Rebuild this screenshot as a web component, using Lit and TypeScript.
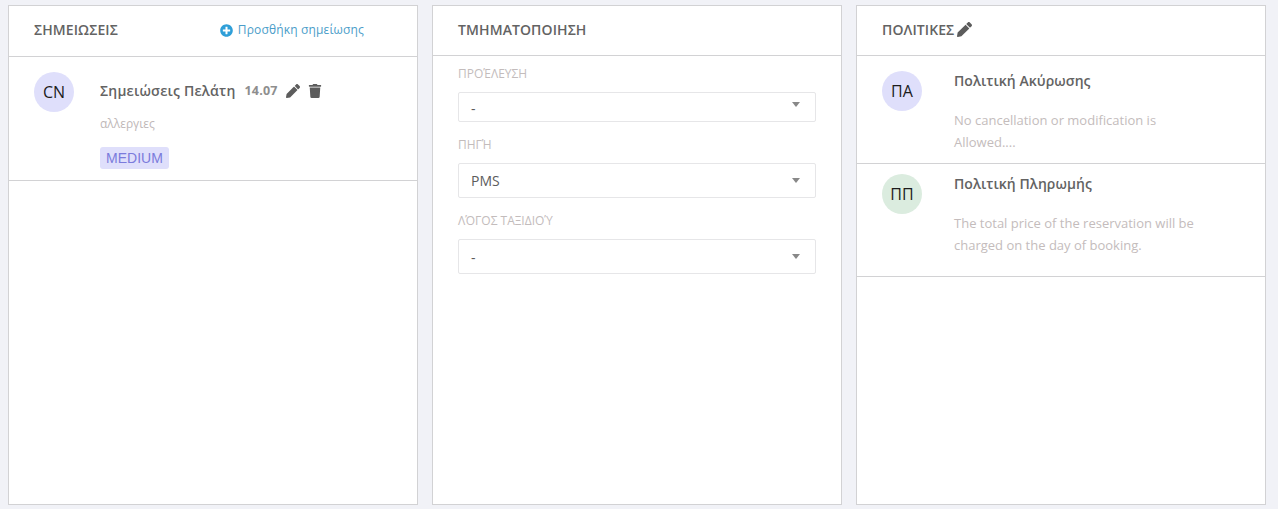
import { LitElement, html, css, svg } from "lit";
import { customElement } from "lit/decorators.js";

const pencil = svg`<path d="M497.9 142.1l-46.1 46.1c-4.7 4.7-12.3 4.7-17 0l-111-111c-4.7-4.7-4.7-12.3 0-17l46.1-46.1c18.7-18.7 49.1-18.7 67.9 0l60.1 60.1c18.8 18.7 18.8 49.1 0 67.9zM284.2 99.8L21.6 362.4.4 483.9c-2.9 16.4 11.4 30.6 27.8 27.8l121.5-21.3 262.6-262.6c4.7-4.7 4.7-12.3 0-17l-111-111c-4.8-4.7-12.4-4.7-17.1 0z"/>`;
const trash = svg`<path d="M432 32H312l-9.4-18.7A24 24 0 0 0 281.1 0H166.8a23.72 23.72 0 0 0-21.4 13.3L136 32H16A16 16 0 0 0 0 48v32a16 16 0 0 0 16 16h416a16 16 0 0 0 16-16V48a16 16 0 0 0-16-16zM53.2 467a48 48 0 0 0 47.9 45h245.8a48 48 0 0 0 47.9-45L416 128H32z"/>`;
const plus = svg`<path d="M256 8C119 8 8 119 8 256s111 248 248 248 248-111 248-248S393 8 256 8zm144 276c0 6.6-5.4 12-12 12h-92v92c0 6.6-5.4 12-12 12h-56c-6.6 0-12-5.4-12-12v-92h-92c-6.6 0-12-5.4-12-12v-56c0-6.6 5.4-12 12-12h92v-92c0-6.6 5.4-12 12-12h56c6.6 0 12 5.4 12 12v92h92c6.6 0 12 5.4 12 12v56z"/>`;

@customElement("app-root")
export class AppRoot extends LitElement {
  static styles = css`
    :host {
      display: block;
      height: 509px;
      box-sizing: border-box;
      background: #f1f2f7;
      font-family: "Open Sans", sans-serif;
      color: #5c5c5c;
      overflow: hidden;
    }
    * { box-sizing: border-box; }
    .page {
      display: grid;
      grid-template-columns: repeat(3, 410px);
      gap: 14px;
      padding: 5px 0 0 8px;
    }
    .panel {
      height: 500px;
      background: #fff;
      border: 1px solid #d2d2d4;
    }
    .head {
      height: 50px;
      padding: 0 25px 2px;
      display: flex;
      align-items: center;
      border-bottom: 1px solid #d2d2d4;
      font-size: 14px;
      font-weight: 600;
      line-height: 20px;
      letter-spacing: 0.1px;
      color: #636363;
    }
    .head.first { height: 51px; justify-content: space-between; padding-right: 53px; }
    .add {
      display: flex;
      align-items: center;
      gap: 5px;
      font-size: 12px;
      font-weight: 400;
      color: #4a9dc9;
      letter-spacing: 0.15px;
    }
    .add svg { width: 13px; height: 13px; fill: #2f9fd8; }
    .head .edit { width: 15px; height: 15px; margin-left: 3px; fill: #5c5c5c; }
    .avatar {
      width: 40px;
      height: 40px;
      flex: none;
      border-radius: 50%;
      display: flex;
      align-items: center;
      justify-content: center;
      font-size: 16px;
      color: #1c1c1c;
    }
    .lilac { background: #dfdffb; }
    .green { background: #dbecdf; }
    .note {
      display: flex;
      height: 124px;
      padding: 15px 25px 0;
      gap: 26px;
      border-bottom: 1px solid #d2d2d4;
    }
    .note-title {
      display: flex;
      align-items: center;
      height: 20px;
      margin-top: 8px;
      font-size: 14px;
      font-weight: 600;
      letter-spacing: 0.2px;
      color: #636363;
      white-space: nowrap;
    }
    .time { margin-left: 9px; font-size: 12.5px; font-weight: 700; letter-spacing: 0.2px; color: #8e8e8e; }
    .ic { fill: #5c5c5c; height: 14px; width: 14px; margin-top: 2px; }
    .ic.p { margin-left: 8px; }
    .ic.t { margin-left: 8px; }
    .note-desc { margin-top: 14px; height: 20px; font-size: 12px; line-height: 20px; color: #c0b8b8; }
    .badge {
      display: inline-block;
      margin-top: 13px;
      height: 22px;
      width: 69px;
      text-align: center;
      border-radius: 3px;
      background: #dfdffb;
      color: #7b7bdc;
      font-family: "Liberation Sans", sans-serif;
      font-size: 14px;
      line-height: 22px;
    }
    .form { padding: 8px 25px 0; }
    .label {
      font-size: 12px;
      line-height: 20px;
      color: #c3bcbc;
      text-transform: uppercase;
    }
    .select {
      position: relative;
      display: flex;
      align-items: center;
      margin: 8px 0 13px;
      height: 30px;
      border: 1px solid #e6e6e8;
      border-radius: 2px;
      padding: 0 12px;
      font-size: 14px;
      color: #5c5c5c;
    }
    .select.tall { height: 35px; }
    .select span { padding-top: 2px; }
    .select.tall .value { padding-top: 0; }
    .select::after {
      content: "";
      position: absolute;
      right: 15px;
      top: 9px;
      border-left: 4.5px solid transparent;
      border-right: 4.5px solid transparent;
      border-top: 5px solid #888;
    }
    .select.tall::after { top: 14px; }
    .policy {
      display: flex;
      padding: 15px 25px 0;
      gap: 32px;
      border-bottom: 1px solid #d2d2d4;
    }
    .policy.a { height: 108px; }
    .policy.b { height: 113px; padding-top: 10px; }
    .p-title { font-size: 14px; font-weight: 600; line-height: 20px; color: #636363; letter-spacing: 0.05px; }
    .p-desc { margin-top: 18px; width: 255px; font-size: 13px; line-height: 22px; color: #c4bcbc; }
  `;

  render() {
    return html`
      <div class="page">
        <section class="panel">
          <div class="head first">
            <span>ΣΗΜΕΙΩΣΕΙΣ</span>
            <span class="add"><svg viewBox="0 0 512 512">${plus}</svg>Προσθήκη σημείωσης</span>
          </div>
          <div class="note">
            <div class="avatar lilac">CN</div>
            <div>
              <div class="note-title">
                Σημειώσεις Πελάτη<span class="time">14.07</span>
                <svg class="ic p" viewBox="0 0 512 512">${pencil}</svg>
                <svg class="ic t" viewBox="0 0 448 512">${trash}</svg>
              </div>
              <div class="note-desc">αλλεργιες</div>
              <span class="badge">MEDIUM</span>
            </div>
          </div>
        </section>
        <section class="panel">
          <div class="head">ΤΜΗΜΑΤΟΠΟΙΗΣΗ</div>
          <div class="form">
            <div class="label">Προέλευση</div>
            <div class="select"><span>-</span></div>
            <div class="label">Πηγή</div>
            <div class="select tall"><span class="value">PMS</span></div>
            <div class="label">Λόγος ταξιδιού</div>
            <div class="select tall"><span>-</span></div>
          </div>
        </section>
        <section class="panel">
          <div class="head">ΠΟΛΙΤΙΚΕΣ<svg class="edit" viewBox="0 0 512 512">${pencil}</svg></div>
          <div class="policy a">
            <div class="avatar lilac">ΠΑ</div>
            <div>
              <div class="p-title">Πολιτική Ακύρωσης</div>
              <div class="p-desc">No cancellation or modification is Allowed....</div>
            </div>
          </div>
          <div class="policy b">
            <div class="avatar green">ΠΠ</div>
            <div>
              <div class="p-title">Πολιτική Πληρωμής</div>
              <div class="p-desc">The total price of the reservation will be charged on the day of booking.</div>
            </div>
          </div>
        </section>
      </div>
    `;
  }
}
